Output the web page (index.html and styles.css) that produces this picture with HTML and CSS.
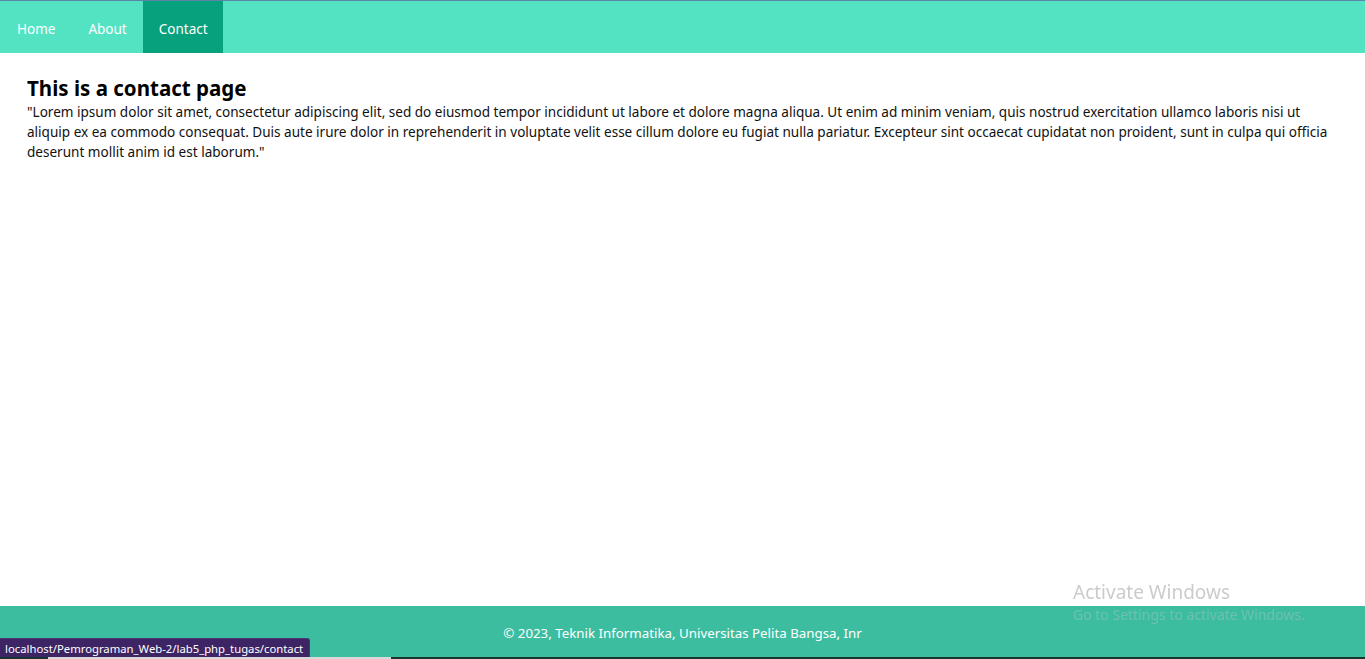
FILE: index.html
```html
<!DOCTYPE html>
<html lang="en">
<head>
<meta charset="utf-8">
<title>Contact</title>
<link rel="stylesheet" href="styles.css">
</head>
<body>
<div class="page">
  <div class="topline"></div>
  <nav class="nav">
    <a class="nav-item" href="#">Home</a>
    <a class="nav-item" href="#">About</a>
    <a class="nav-item active" href="#">Contact</a>
  </nav>
  <main class="content">
    <h1 class="title">This is a contact page</h1>
    <p class="text">"Lorem ipsum dolor sit amet, consectetur adipiscing elit, sed do eiusmod tempor incididunt ut labore et dolore magna aliqua. Ut enim ad minim veniam, quis nostrud exercitation ullamco laboris nisi ut aliquip ex ea commodo consequat. Duis aute irure dolor in reprehenderit in voluptate velit esse cillum dolore eu fugiat nulla pariatur. Excepteur sint occaecat cupidatat non proident, sunt in culpa qui officia deserunt mollit anim id est laborum."</p>
  </main>
  <footer class="footer">© 2023, Teknik Informatika, Universitas Pelita Bangsa, Inr</footer>
  <div class="taskbar-edge"><span class="edge-light"></span></div>
</div>
<div class="status-link">localhost/Pemrograman_Web-2/lab5_php_tugas/contact</div>
<div class="watermark">
  <div class="wm-title">Activate Windows</div>
  <div class="wm-sub">Go to Settings to activate Windows.</div>
</div>
</body>
</html>
```
FILE: styles.css
```css
html, body {
  margin: 0;
  padding: 0;
  height: 100%;
  overflow: hidden;
}
body {
  font-family: "Noto Sans", "Open Sans", "Liberation Sans", sans-serif;
  background: #ffffff;
  color: #000000;
}
.page {
  display: flex;
  flex-direction: column;
  height: 659px;
}
.topline {
  height: 1px;
  background: #5b84a6;
  flex: none;
}
.nav {
  display: flex;
  height: 52px;
  background: #53e3c2;
  flex: none;
}
.nav-item {
  display: flex;
  align-items: center;
  padding: 3px 16px 0 17px;
  color: #ffffff;
  text-decoration: none;
  font-size: 13.5px;
}
.nav-item.active {
  background: #07a17d;
  padding: 3px 15px 0 16px;
}
.content {
  flex: 1;
  padding: 22px 27px 0 27px;
}
.title {
  margin: 0;
  font-size: 20.5px;
  line-height: 27px;
  font-weight: 700;
}
.text {
  margin: 0;
  font-size: 13.55px;
  line-height: 20px;
  color: #111111;
}
.footer {
  flex: none;
  height: 51px;
  background: #3dbd9f;
  color: #ffffff;
  font-size: 13.3px;
  display: flex;
  align-items: center;
  justify-content: center;
  padding-top: 3px;
  box-sizing: border-box;
}
.taskbar-edge {
  flex: none;
  height: 2px;
  background: #17342e;
  display: flex;
}
.edge-light {
  margin-left: 48px;
  width: 343px;
  background: #d9d9d9;
}
.status-link {
  position: fixed;
  left: 0;
  top: 638px;
  height: 19px;
  padding: 0 6px 0 5px;
  background: #3d2565;
  color: #ffffff;
  font-size: 11.3px;
  line-height: 19px;
  border-top-right-radius: 3px;
  border-top: 1px solid #4c3578;
  border-right: 1px solid #4c3578;
  box-sizing: border-box;
}
.watermark {
  position: fixed;
  left: 1073px;
  top: 580px;
  pointer-events: none;
}
.wm-title {
  font-size: 19px;
  line-height: 24px;
  color: rgba(160, 160, 160, 0.55);
}
.wm-sub {
  font-size: 14px;
  line-height: 22px;
  color: rgba(200, 200, 200, 0.35);
}
```
